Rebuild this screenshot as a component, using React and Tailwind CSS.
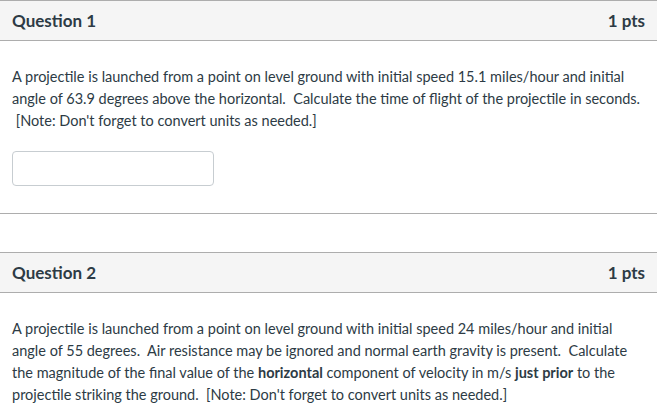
import React from "react";

function QuestionCard({ title, points, children, answer }) {
  return (
    <div className="border-t border-b border-[#adadad] bg-white">
      <div className="h-[40px] bg-[#f5f5f5] border-b border-[#adadad] flex items-center justify-between px-3">
        <h2 className="text-[17px] font-bold text-[#2d3b45]">{title}</h2>
        <div className="text-[17px] font-bold text-[#2d3b45]">{points}</div>
      </div>
      <div className="px-3 pt-[25px] pb-[27px]">
        <p className="text-[14.5px] leading-[22px] text-[#2d3b45] whitespace-nowrap">{children}</p>
        {answer && (
          <input
            type="text"
            className="mt-[19px] block w-[202px] h-[35px] border border-[#c7cdd1] rounded-[4px] bg-white"
          />
        )}
      </div>
    </div>
  );
}

export default function App() {
  return (
    <div
      className="w-[657px] min-h-[420px] bg-white overflow-hidden"
      style={{ fontFamily: "Lato, 'Open Sans', sans-serif" }}
    >
      <QuestionCard title="Question 1" points="1 pts" answer>
        A projectile is launched from a point on level ground with initial speed 15.1 miles/hour and initial
        <br />
        angle of 63.9 degrees above the horizontal.{"\u00a0"} Calculate the time of flight of the projectile in seconds.
        <br />
        {"\u00a0"}[Note: Don't forget to convert units as needed.]
      </QuestionCard>

      <div className="mt-[38px]">
        <QuestionCard title="Question 2" points="1 pts">
          A projectile is launched from a point on level ground with initial speed 24 miles/hour and initial
          <br />
          angle of 55 degrees.{"\u00a0"} Air resistance may be ignored and normal earth gravity is present.{"\u00a0"} Calculate
          <br />
          the magnitude of the final value of the <strong>horizontal</strong> component of velocity in m/s{" "}
          <strong>just prior</strong> to the
          <br />
          projectile striking the ground.{"\u00a0"} [Note: Don't forget to convert units as needed.]
        </QuestionCard>
      </div>
    </div>
  );
}
